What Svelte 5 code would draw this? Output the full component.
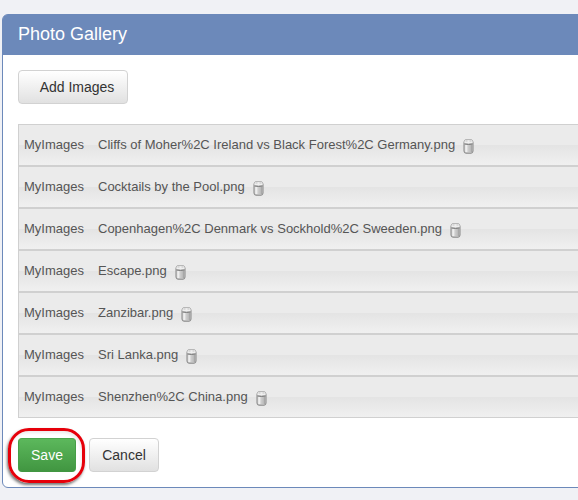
<script>
  const images = [
    'Cliffs of Moher%2C Ireland vs Black Forest%2C Germany.png',
    'Cocktails by the Pool.png',
    'Copenhagen%2C Denmark vs Sockhold%2C Sweeden.png',
    'Escape.png',
    'Zanzibar.png',
    'Sri Lanka.png',
    'Shenzhen%2C China.png'
  ];
</script>

<main>
  <section class="panel">
    <header>Photo Gallery</header>
    <div class="body">
      <button class="btn add">Add Images</button>
      <ul>
        {#each images as name}
          <li>
            <span class="folder">MyImages</span>
            <span class="name">{name}</span>
            <svg width="12" height="15" viewBox="0 0 12 15" aria-hidden="true">
              <path d="M1 3.5V12Q1 14.2 3 14.2H8Q10 14.2 10 12V3.5Z" fill="#d2d2d2" stroke="#858585" />
              <path d="M3.3 5.5V13" stroke="#eeeeee" stroke-width="2" />
              <path d="M6.2 5.5V13" stroke="#c0c0c0" stroke-width="1.2" />
              <path d="M8.2 5.5V13" stroke="#9d9d9d" stroke-width="1.2" />
              <path d="M2.3 .6H8.7Q10.2 1.8 10.2 3.8Q9.8 5 5.5 5T.8 3.8Q.8 1.8 2.3 .6Z" fill="#efefef" stroke="#a2a2a2" stroke-width=".8" />
              <path d="M2.5 2H4.5M6.5 2H8.5" stroke="#c4c4c4" />
              <path d="M1.5 5Q5.5 6 9.5 5" stroke="#7d7d7d" />
            </svg>
          </li>
        {/each}
      </ul>
      <div class="actions">
        <div class="save-wrap">
          <button class="btn save">Save</button>
          <span class="ring"></span>
        </div>
        <button class="btn cancel">Cancel</button>
      </div>
    </div>
  </section>
</main>

<style>
  :global(body) {
    margin: 0;
    background: #f0f1f5;
  }
  main {
    box-sizing: border-box;
    width: 100%;
    height: 500px;
    padding: 14px 0 12px 2px;
    overflow: hidden;
    font-family: "Liberation Sans", Arial, sans-serif;
  }
  .panel {
    box-sizing: border-box;
    width: 620px;
    height: 474px;
    border: 1px solid #6c89ba;
    border-radius: 6px;
    background: #fff;
  }
  header {
    box-sizing: border-box;
    height: 40px;
    padding-left: 15px;
    background: #6c89ba;
    border-radius: 4px 4px 0 0;
    color: #fff;
    font-size: 18px;
    line-height: 38px;
  }
  .body {
    padding: 15px 0 0 15px;
  }
  .btn {
    display: block;
    box-sizing: border-box;
    height: 34px;
    margin: 0;
    padding: 0;
    border: 1px solid #d2d2d2;
    border-radius: 4px;
    background: linear-gradient(#fff, #e1e1e1);
    color: #333;
    font: 14px/20px "Liberation Sans", Arial, sans-serif;
    text-align: center;
  }
  .add {
    width: 110px;
    padding-left: 8px;
  }
  ul {
    margin: 20px 0 0;
    padding: 0;
    list-style: none;
  }
  li {
    display: flex;
    align-items: center;
    box-sizing: border-box;
    height: 42px;
    padding: 0 0 1px 5px;
    border: 1px solid #d0d0d0;
    background: linear-gradient(#ebebeb 0, #ebebeb 50%, #e4e4e4 51%, #f0f0f0 100%);
    color: #555;
    font-size: 13px;
    white-space: nowrap;
  }
  .folder {
    width: 74px;
  }
  svg {
    display: block;
    margin: 4px 0 0 8px;
    fill: none;
  }
  .actions {
    display: flex;
    gap: 13px;
    margin-top: 20px;
  }
  .save-wrap {
    position: relative;
  }
  .save {
    width: 58px;
    border-color: #4ba64b #469e46 #419641;
    background: linear-gradient(#5cb85c, #419641);
    color: #fff;
  }
  .ring {
    position: absolute;
    box-sizing: border-box;
    left: -10px;
    top: -10px;
    width: 77px;
    height: 55px;
    border: 3px solid #e6000a;
    border-radius: 21px;
    box-shadow: -1px 2px 3px rgba(0, 0, 0, 0.55), inset -1px 2px 3px rgba(0, 0, 0, 0.08);
    pointer-events: none;
  }
  .cancel {
    width: 70px;
  }
</style>
